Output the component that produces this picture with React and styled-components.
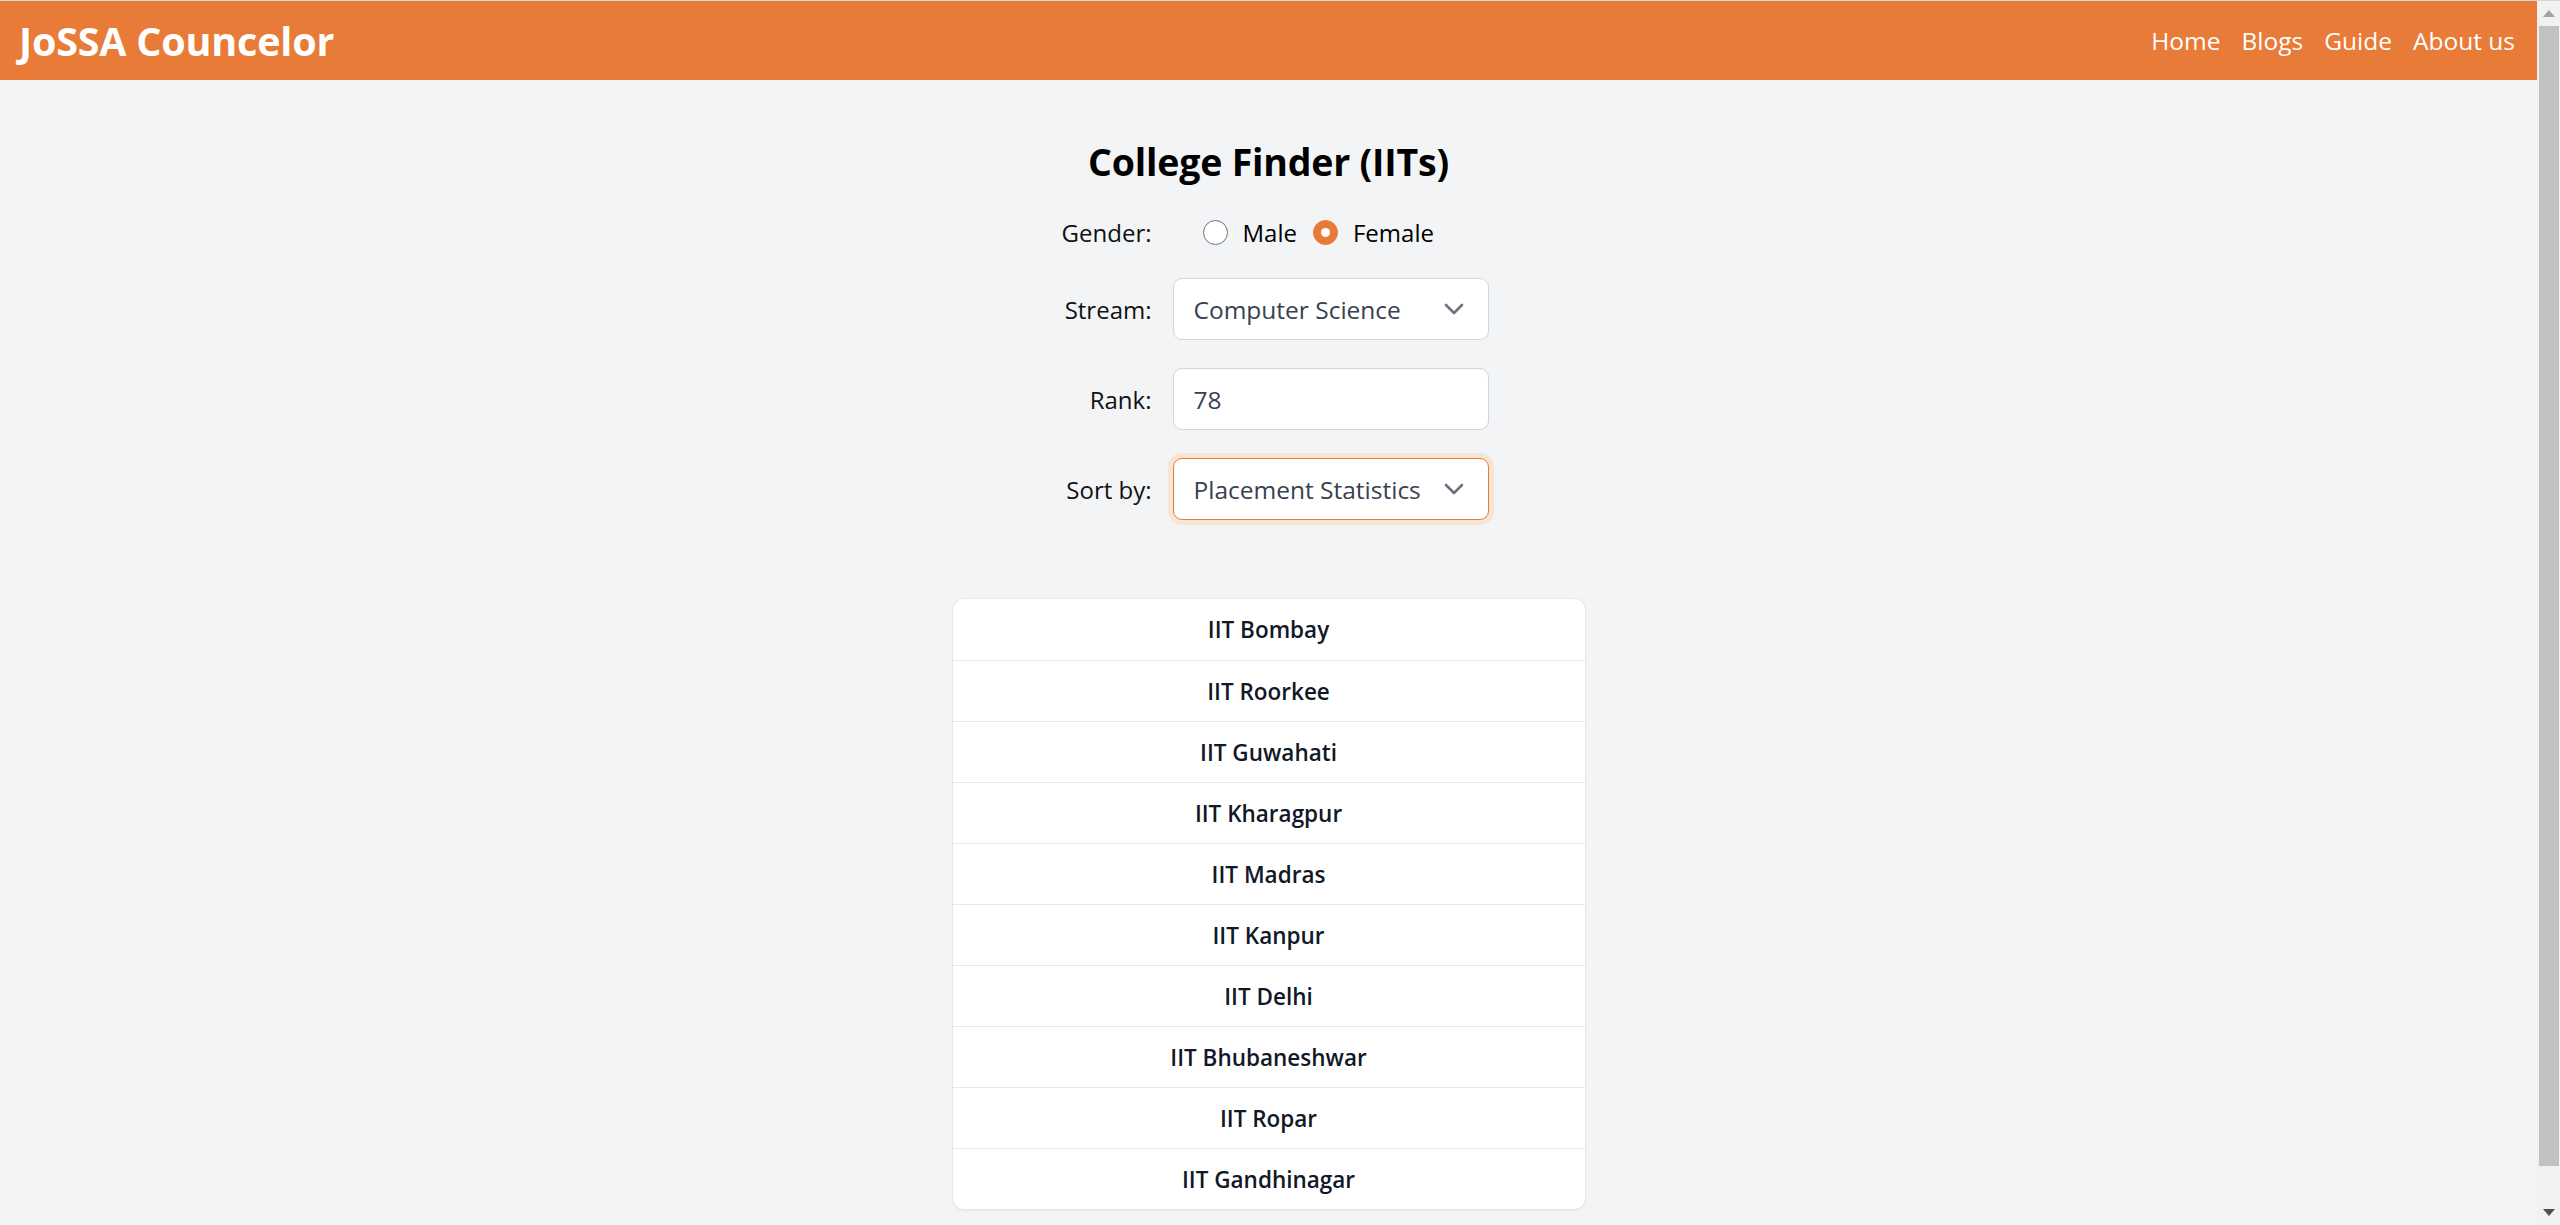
import React from 'react';
import styled, { createGlobalStyle } from 'styled-components';

const GlobalStyle = createGlobalStyle`
  html, body {
    margin: 0;
    padding: 0;
    height: 100%;
    overflow: hidden;
  }
  body {
    font-family: "Open Sans", "Noto Sans", sans-serif;
    background: #f3f4f6;
    color: #000;
  }
`;

const ORANGE = '#e87b37';

const Page = styled.div`
  display: flex;
  height: 100vh;
  border-top: 1px solid #d6d6d6;
  box-sizing: border-box;
`;

const Main = styled.main`
  flex: 1;
  min-width: 0;
  overflow: hidden;
  background: #f3f4f6;
`;

const Header = styled.header`
  height: 79px;
  background: ${ORANGE};
  display: flex;
  align-items: center;
  justify-content: space-between;
  padding: 0 22px 0 19px;
`;

const Logo = styled.div`
  color: #fff;
  font-size: 39.5px;
  font-weight: 700;
  letter-spacing: -0.2px;
`;

const Nav = styled.nav`
  display: flex;
  gap: 21px;
  a {
    color: #fff;
    text-decoration: none;
    font-size: 24.5px;
  }
`;

const Content = styled.section`
  display: flex;
  flex-direction: column;
  align-items: center;
  padding-top: 55px;
`;

const Title = styled.h1`
  margin: 0 0 25px;
  font-size: 37.5px;
  line-height: 54px;
  font-weight: 700;
  letter-spacing: -0.2px;
`;

const Form = styled.div`
  display: grid;
  grid-template-columns: 103px 316px;
  column-gap: 21px;
  row-gap: 28px;
  align-items: center;
`;

const Label = styled.label`
  text-align: right;
  font-size: 24px;
  color: #111;
  white-space: nowrap;
`;

const RadioGroup = styled.div`
  display: flex;
  align-items: center;
  height: 36px;
  padding-left: 30px;
  font-size: 24px;
`;

const RadioOption = styled.label`
  display: flex;
  align-items: center;
  gap: 15px;
  margin-right: 16px;
`;

const RadioDot = styled.span`
  width: 25px;
  height: 25px;
  box-sizing: border-box;
  border-radius: 50%;
  background: ${(p) => (p.checked ? ORANGE : '#fff')};
  border: 1px solid ${(p) => (p.checked ? ORANGE : '#6b7280')};
  display: flex;
  align-items: center;
  justify-content: center;
  &::after {
    content: '';
    display: ${(p) => (p.checked ? 'block' : 'none')};
    width: 9px;
    height: 9px;
    border-radius: 50%;
    background: #fff;
  }
`;

const Field = styled.div`
  height: 62px;
  box-sizing: border-box;
  background: #fff;
  border: 1px solid ${(p) => (p.focused ? ORANGE : '#d1d5db')};
  border-radius: 9px;
  box-shadow: ${(p) => (p.focused ? '0 0 0 5px #f6e5d3' : 'none')};
  display: flex;
  align-items: center;
  justify-content: space-between;
  padding: 0 24px 0 20px;
  font-size: 24.5px;
  color: #374151;
  white-space: nowrap;
`;

const Chevron = () => (
  <svg width="20" height="12" viewBox="0 0 20 12" fill="none">
    <path d="M2 2l8 8 8-8" stroke="#6b7280" strokeWidth="2.6" strokeLinecap="round" strokeLinejoin="round" />
  </svg>
);

const List = styled.ul`
  list-style: none;
  margin: 78px 0 0;
  padding: 0;
  width: 632px;
  background: #fff;
  border: 1px solid #e5e7eb;
  border-radius: 12px;
  box-shadow: 0 1px 2px rgba(0, 0, 0, 0.05);
  overflow: hidden;
`;

const Item = styled.li`
  box-sizing: border-box;
  height: 61px;
  display: flex;
  align-items: center;
  justify-content: center;
  font-size: 22.5px;
  font-weight: 600;
  color: #111827;
  & + & {
    border-top: 1px solid #e5e7eb;
  }
`;

const Scrollbar = styled.aside`
  width: 23px;
  background: #f1f1f1;
  display: flex;
  flex-direction: column;
  align-items: center;
`;

const Arrow = styled.div`
  height: 25px;
  display: flex;
  align-items: center;
  justify-content: center;
`;

const Thumb = styled.div`
  width: 20px;
  height: 1140px;
  background: #c1c1c1;
`;

const Spacer = styled.div`
  flex: 1;
`;

const colleges = [
  'IIT Bombay',
  'IIT Roorkee',
  'IIT Guwahati',
  'IIT Kharagpur',
  'IIT Madras',
  'IIT Kanpur',
  'IIT Delhi',
  'IIT Bhubaneshwar',
  'IIT Ropar',
  'IIT Gandhinagar',
];

export default function App() {
  return (
    <>
      <GlobalStyle />
      <Page>
        <Main>
          <Header>
            <Logo>JoSSA Councelor</Logo>
            <Nav>
              <a href="#home">Home</a>
              <a href="#blogs">Blogs</a>
              <a href="#guide">Guide</a>
              <a href="#about">About us</a>
            </Nav>
          </Header>
          <Content>
            <Title>College Finder (IITs)</Title>
            <Form>
              <Label>Gender:</Label>
              <RadioGroup>
                <RadioOption>
                  <RadioDot />
                  Male
                </RadioOption>
                <RadioOption>
                  <RadioDot checked />
                  Female
                </RadioOption>
              </RadioGroup>
              <Label>Stream:</Label>
              <Field>
                Computer Science
                <Chevron />
              </Field>
              <Label>Rank:</Label>
              <Field>78</Field>
              <Label>Sort by:</Label>
              <Field focused>
                Placement Statistics
                <Chevron />
              </Field>
            </Form>
            <List>
              {colleges.map((c) => (
                <Item key={c}>{c}</Item>
              ))}
            </List>
          </Content>
        </Main>
        <Scrollbar>
          <Arrow>
            <svg width="12" height="7" viewBox="0 0 12 7">
              <path d="M0 7L6 0l6 7z" fill="#a3a3a3" />
            </svg>
          </Arrow>
          <Thumb />
          <Spacer />
          <Arrow>
            <svg width="12" height="7" viewBox="0 0 12 7">
              <path d="M0 0h12L6 7z" fill="#505050" />
            </svg>
          </Arrow>
        </Scrollbar>
      </Page>
    </>
  );
}
